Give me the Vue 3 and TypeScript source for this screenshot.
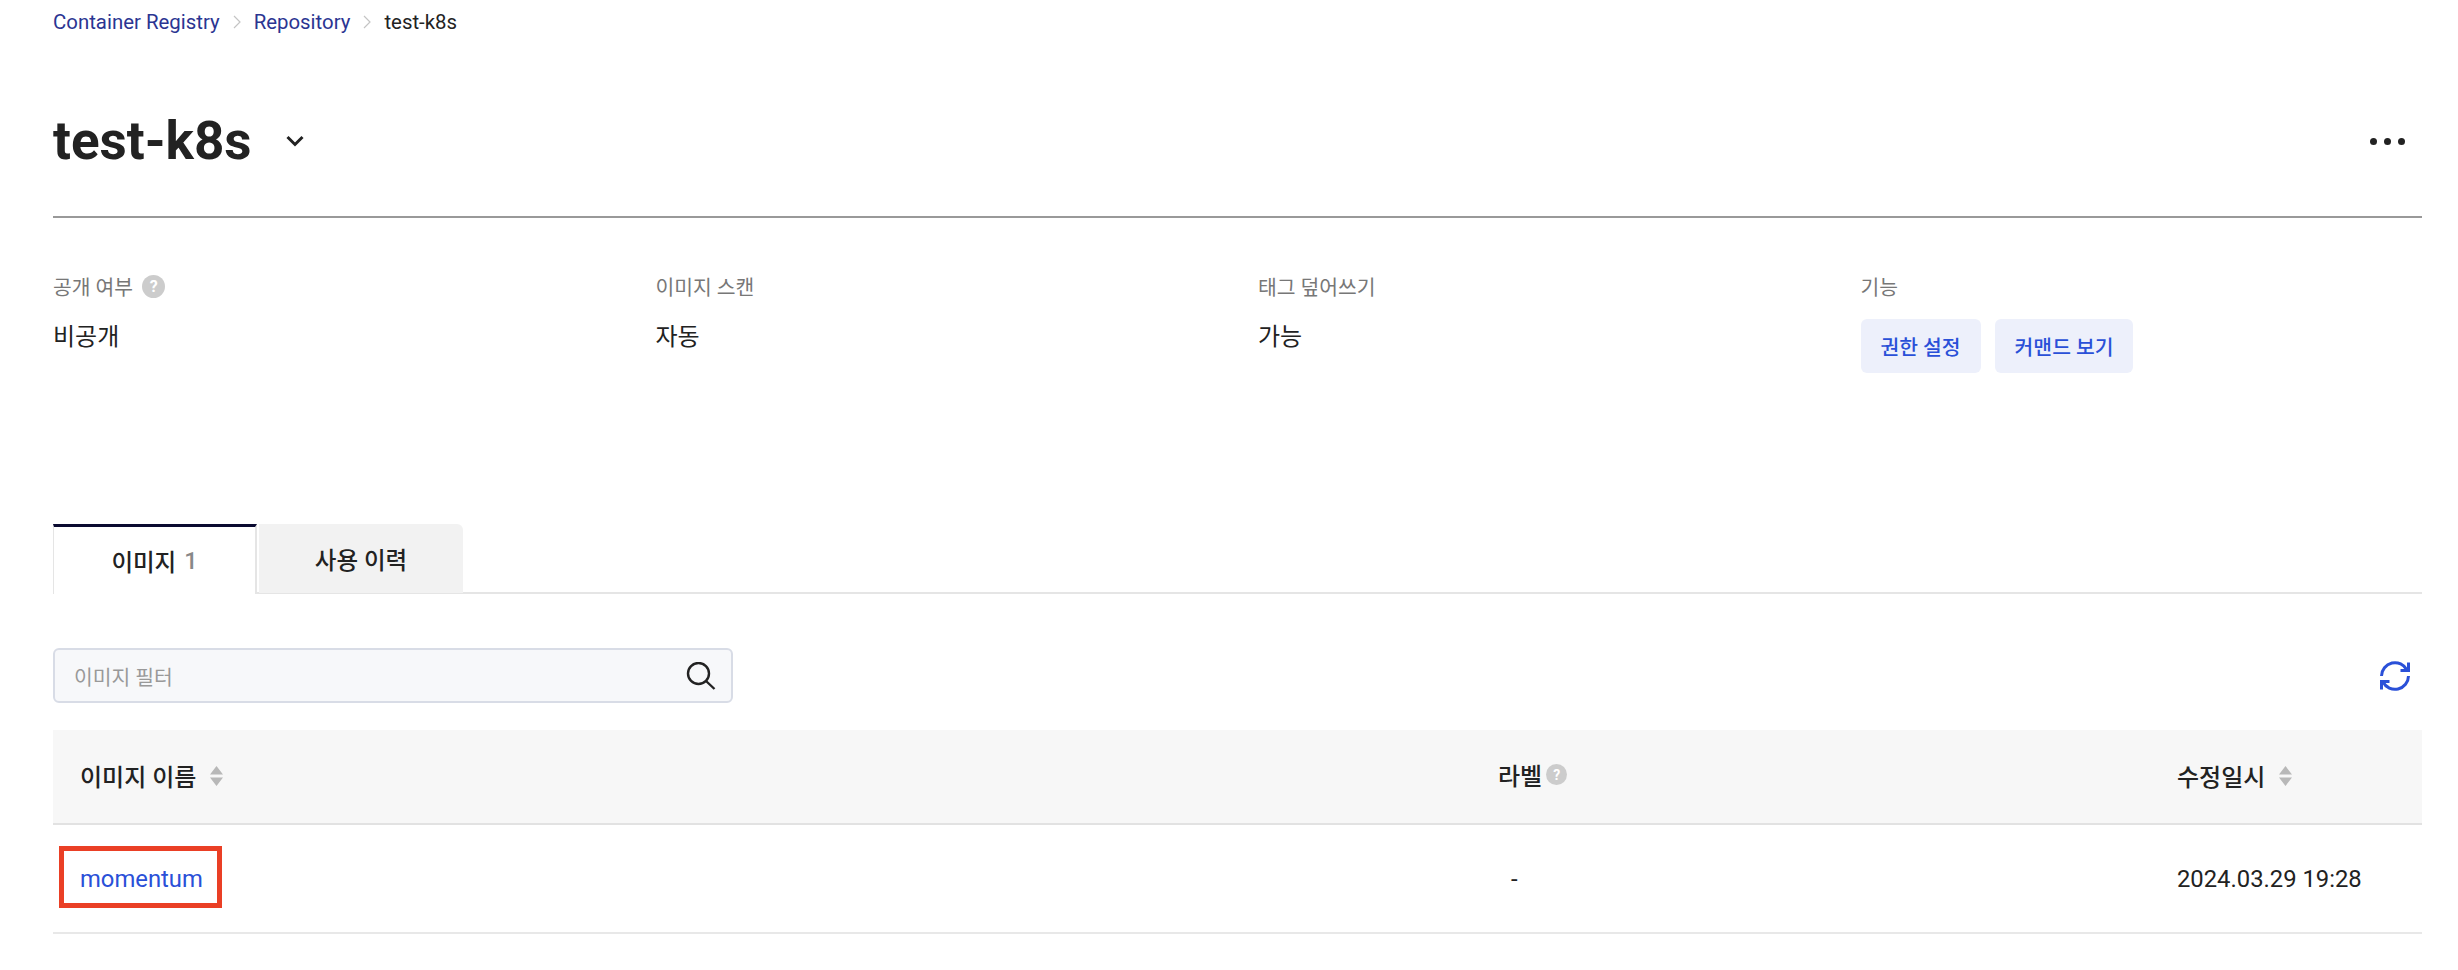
<script setup lang="ts">
interface MetaItem {
  label: string
  value?: string
  help?: boolean
}

const metaItems: MetaItem[] = [
  { label: '공개 여부', value: '비공개', help: true },
  { label: '이미지 스캔', value: '자동' },
  { label: '태그 덮어쓰기', value: '가능' }
]
</script>

<template>
  <div class="page">
    <nav class="crumbs">
      <a class="crumb-link">Container Registry</a>
      <svg class="crumb-sep" width="8" height="14" viewBox="0 0 8 14"><path d="M1 1l6 6-6 6" /></svg>
      <a class="crumb-link">Repository</a>
      <svg class="crumb-sep" width="8" height="14" viewBox="0 0 8 14"><path d="M1 1l6 6-6 6" /></svg>
      <span class="crumb-current">test-k8s</span>
    </nav>

    <header class="title-bar">
      <h1 class="title">test-k8s</h1>
      <svg class="title-caret" width="18" height="12" viewBox="0 0 18 12"><path d="M1.5 2l7.5 7.5L16.5 2" /></svg>
      <svg class="more" width="35" height="7" viewBox="0 0 35 7">
        <circle cx="3.5" cy="3.5" r="3.5" />
        <circle cx="17.5" cy="3.5" r="3.5" />
        <circle cx="31.5" cy="3.5" r="3.5" />
      </svg>
    </header>

    <section class="meta">
      <div v-for="item in metaItems" :key="item.label" class="meta-col">
        <div class="meta-label">
          {{ item.label }}
          <span v-if="item.help" class="help help-lg">?</span>
        </div>
        <div class="meta-value">{{ item.value }}</div>
      </div>
      <div class="meta-col">
        <div class="meta-label">기능</div>
        <div class="meta-actions">
          <button class="soft-btn">권한 설정</button>
          <button class="soft-btn">커맨드 보기</button>
        </div>
      </div>
    </section>

    <div class="tabs">
      <div class="tab active">이미지 <span class="tab-count">1</span></div>
      <div class="tab">사용 이력</div>
    </div>

    <div class="toolbar">
      <div class="search">
        <span class="search-placeholder">이미지 필터</span>
        <svg class="search-icon" width="30" height="28" viewBox="0 0 30 28">
          <circle cx="12.5" cy="11.5" r="10.5" />
          <path d="M20 19l8.5 8" />
        </svg>
      </div>
      <svg class="refresh" width="30" height="30" viewBox="0 0 30 30">
        <path d="M1.5 15A13.5 13.5 0 0 1 27 9" />
        <path d="M28.5 1.5V9.5H20.5" />
        <path d="M28.5 15A13.5 13.5 0 0 1 3 21" />
        <path d="M1.5 28.5V20.5H9.5" />
      </svg>
    </div>

    <div class="table">
      <div class="thead">
        <div class="th th-first">
          이미지 이름
          <svg class="sort" width="13" height="20" viewBox="0 0 13 20"><path d="M6.5 0L13 8.5H0zM6.5 20L0 11.5h13z" /></svg>
        </div>
        <div class="th th-label">
          라벨
          <span class="help help-sm">?</span>
        </div>
        <div class="th">
          수정일시
          <svg class="sort" width="13" height="20" viewBox="0 0 13 20"><path d="M6.5 0L13 8.5H0zM6.5 20L0 11.5h13z" /></svg>
        </div>
      </div>
      <div class="tr">
        <div class="td td-first"><a class="name-link">momentum</a></div>
        <div class="td td-dash">-</div>
        <div class="td">2024.03.29 19:28</div>
        <span class="callout"></span>
      </div>
    </div>
  </div>
</template>

<style scoped>
.page {
  width: 2458px;
  height: 970px;
  box-sizing: border-box;
  padding: 0 36px 0 53px;
  background: #fff;
  color: #222;
  font-family: Roboto, "Noto Sans CJK KR", sans-serif;
  overflow: hidden;
}

.crumbs {
  display: flex;
  align-items: center;
  height: 44px;
  font-size: 20.4px;
}

.crumb-link {
  color: #2b3592;
}

.crumb-current {
  color: #222;
}

.crumb-sep {
  margin: 0 13px;
  fill: none;
  stroke: #c4c4c4;
  stroke-width: 1.2;
}

.title-bar {
  display: flex;
  align-items: center;
  height: 174px;
  box-sizing: border-box;
  padding-top: 22px;
  border-bottom: 2px solid #999;
}

.title {
  margin: 0;
  font-size: 53px;
  font-weight: 700;
  line-height: 1;
  color: #222;
}

.title-caret {
  margin-left: 34px;
  fill: none;
  stroke: #222;
  stroke-width: 3;
}

.more {
  margin-left: auto;
  margin-right: 17px;
  fill: #222;
}

.meta {
  display: grid;
  grid-template-columns: repeat(3, 602.5px) 1fr;
  margin-top: 53px;
  height: 253px;
}

.meta-label {
  display: flex;
  align-items: center;
  gap: 9px;
  height: 30px;
  font-size: 20.4px;
  color: #777;
}

.meta-value {
  margin-top: 21px;
  font-size: 24px;
  line-height: 30px;
  color: #222;
}

.meta-actions {
  display: flex;
  gap: 14px;
  margin-top: 18px;
}

.soft-btn {
  height: 54px;
  padding: 0 20px;
  border: 0;
  border-radius: 6px;
  background: #edf0fb;
  color: #2a50d8;
  font-family: inherit;
  font-size: 20.4px;
  font-weight: 500;
}

.help {
  display: inline-flex;
  align-items: center;
  justify-content: center;
  border-radius: 50%;
  background: #ccc;
  color: #fff;
  font-weight: 700;
}

.help-lg {
  width: 23px;
  height: 23px;
  font-size: 16px;
}

.help-sm {
  width: 21px;
  height: 21px;
  margin-left: 4px;
  font-size: 14px;
}

.tabs {
  display: flex;
  gap: 2px;
  height: 70px;
  box-sizing: border-box;
  border-bottom: 2px solid #e5e5e5;
}

.tab {
  display: flex;
  align-items: center;
  justify-content: center;
  gap: 8px;
  width: 204px;
  height: 69px;
  box-sizing: border-box;
  border-top-right-radius: 6px;
  background: #f2f2f2;
  font-size: 23.5px;
  font-weight: 500;
  color: #222;
}

.tab.active {
  height: 70px;
  border-top: 3px solid #0a0a30;
  border-left: 1px solid #e5e5e5;
  border-right: 2px solid #e5e5e5;
  border-radius: 0;
  background: #fff;
}

.tab-count {
  color: #888;
}

.toolbar {
  display: flex;
  align-items: center;
  justify-content: space-between;
  margin-top: 54px;
  padding-right: 12px;
}

.search {
  display: flex;
  align-items: center;
  justify-content: space-between;
  width: 680px;
  height: 55px;
  box-sizing: border-box;
  padding: 0 15px 0 19px;
  border: 2px solid #d8dce6;
  border-radius: 6px;
  background: #f7f8fa;
}

.search-placeholder {
  font-size: 20.4px;
  color: #999;
}

.search-icon {
  fill: none;
  stroke: #222;
  stroke-width: 2.4;
}

.refresh {
  fill: none;
  stroke: #2a50d8;
  stroke-width: 3;
}

.table {
  margin-top: 27px;
}

.thead,
.tr {
  display: grid;
  grid-template-columns: 1417px 679px 1fr;
}

.thead {
  height: 95px;
  box-sizing: border-box;
  padding-bottom: 2px;
  border-bottom: 2px solid #e2e2e2;
  background: #f7f7f7;
}

.th {
  display: flex;
  align-items: center;
  padding-left: 28px;
  font-size: 24px;
  font-weight: 500;
  color: #222;
}

.th-first,
.td-first {
  padding-left: 27px;
}

.th-label {
  padding-bottom: 2px;
}

.sort {
  margin-left: 14px;
  fill: #b8b8b8;
}

.tr {
  position: relative;
  height: 109px;
  box-sizing: border-box;
  border-bottom: 2px solid #e8e8e8;
}

.td {
  display: flex;
  align-items: center;
  padding-left: 28px;
  font-size: 23.8px;
  color: #222;
}

.td-first {
  padding-left: 27px;
}

.td-dash {
  padding-left: 41px;
}

.name-link {
  color: #2a50d8;
}

.callout {
  position: absolute;
  top: 21px;
  left: 6px;
  width: 163px;
  height: 62px;
  box-sizing: border-box;
  border: 5px solid #ea3f25;
}
</style>
